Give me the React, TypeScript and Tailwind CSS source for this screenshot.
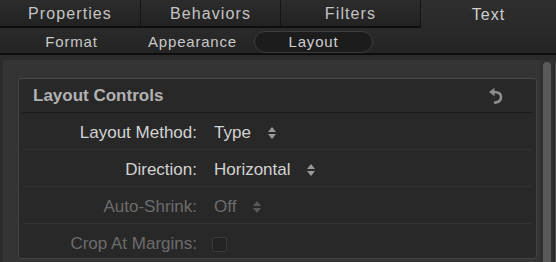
import React from "react";

const Stepper = ({ dim }: { dim?: boolean }) => (
  <svg width="10" height="14" viewBox="0 0 10 14" className="shrink-0">
    <path d="M1 6 L5 1 L9 6 Z" fill={dim ? "#5a5a5a" : "#9a9a9a"} />
    <path d="M1 8 L5 13 L9 8 Z" fill={dim ? "#5a5a5a" : "#9a9a9a"} />
  </svg>
);

const ResetIcon = () => (
  <svg width="16" height="17" viewBox="0 0 16 17">
    <path d="M1 5 L6.5 0.8 L6.5 9.2 Z" fill="#8c8c8c" />
    <path d="M6 5 C10.5 5 13 6.8 13 10 C13 13.3 10.5 15.2 7 15.6" fill="none" stroke="#8c8c8c" strokeWidth="2.6" strokeLinecap="round" />
  </svg>
);

const Row = ({ label, children, dim, last }: { label: string; children: React.ReactNode; dim?: boolean; last?: boolean }) => (
  <div className={`flex items-center h-[37px] pt-[3px] ${last ? "" : "border-b border-[#323232]"} mx-[4px]`}>
    <div className={`w-[174px] text-right text-[17px] ${dim ? "text-[#6c6c6c]" : "text-[#d2d2d2]"}`}>{label}</div>
    <div className="ml-[17px] flex items-center">{children}</div>
  </div>
);

export default function App() {
  const tabs = ["Properties", "Behaviors", "Filters"];
  return (
    <div className="w-[556px] h-[262px] overflow-hidden bg-[#343434] flex flex-col" style={{ fontFamily: '"Liberation Sans", Arial, sans-serif' }}>
      {/* Top tabs */}
      <div className="flex h-[28px] shrink-0">
        {tabs.map((t, i) => (
          <div
            key={t}
            className={`w-[140px] h-[28px] pt-[2px] flex items-center justify-center text-[16px] tracking-[1.1px] text-[#c4c4c4] bg-gradient-to-b from-[#2c2c2c] to-[#222222] border-b-2 border-[#0e0e0e] ${i > 0 ? "border-l border-l-[#151515]" : ""}`}
          >
            {t}
          </div>
        ))}
        <div className="flex-1 h-[28px] pt-[2px] flex items-center justify-center text-[16px] tracking-[1.1px] text-[#d0d0d0] bg-gradient-to-b from-[#2e2e2e] to-[#2a2a2a] border-l border-[#151515]">
          Text
        </div>
      </div>
      {/* Sub tabs */}
      <div className="flex h-[27px] shrink-0 pl-[11px] bg-gradient-to-b from-[#2a2a2a] to-[#242424] border-b-2 border-[#0e0e0e]">
        <div className="w-[121px] pt-[3px] flex items-center justify-center text-[15px] tracking-[0.8px] text-[#c8c8c8]">Format</div>
        <div className="w-[121px] pt-[3px] flex items-center justify-center text-[15px] tracking-[0.8px] text-[#c8c8c8]">Appearance</div>
        <div className="w-[121px] flex items-center justify-center pt-[2px]">
          <div className="w-[119px] h-[22px] pt-[2px] rounded-full bg-[#1c1c1c] border border-[#3c3c3c] flex items-center justify-center text-[15px] tracking-[0.8px] text-[#cfcfcf]">
            Layout
          </div>
        </div>
      </div>
      {/* Content */}
      <div className="flex flex-1 min-h-0 border-t-[5px] border-[#2b2b2b]">
        <div className="w-[3px] bg-[#2c2c2c]" />
        <div className="w-[537px] pl-[15px] pt-[18px]">
          <div className="w-[519px] h-[181px] rounded-[4px] bg-[#282828] border border-[#434343] border-t-[#4a4a4a] border-b-[#444444] overflow-hidden">
            <div className="h-[34px] flex items-center justify-between pl-[14px] pr-[29px] mx-[3px] border-b border-[#1b1b1b]">
              <span className="text-[17px] font-bold text-[#b2b2b2] -ml-[3px]">Layout Controls</span>
              <ResetIcon />
            </div>
            <Row label="Layout Method:">
              <span className="text-[17px] text-[#d2d2d2]">Type</span>
              <span className="ml-[16px]"><Stepper /></span>
            </Row>
            <Row label="Direction:">
              <span className="text-[17px] text-[#d2d2d2]">Horizontal</span>
              <span className="ml-[15px]"><Stepper /></span>
            </Row>
            <Row label="Auto-Shrink:" dim>
              <span className="text-[17px] text-[#6c6c6c]">Off</span>
              <span className="ml-[16px]"><Stepper dim /></span>
            </Row>
            <Row label="Crop At Margins:" dim last>
              <span className="w-[15px] h-[15px] rounded-[2px] border border-[#3a3a3a] bg-[#232323] -ml-[2px]" />
            </Row>
          </div>
        </div>
        <div className="flex-1 flex pt-[2px] pl-[3px] bg-[#303030]">
          <div className="w-[8px] h-full rounded-t-full bg-[#5a5a5a]" />
          <div className="w-[2px] ml-[2px] bg-[#2a2a2a]" />
          <div className="flex-1 bg-[#505050]" />
        </div>
      </div>
    </div>
  );
}
